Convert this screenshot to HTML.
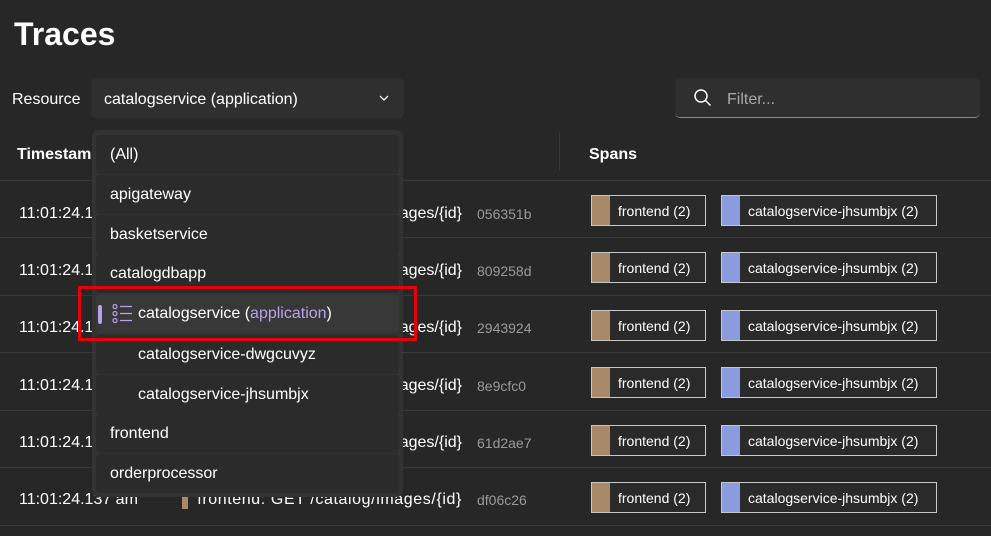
<!DOCTYPE html>
<html><head><style>
body{margin:0;width:991px;height:536px;background:#272727;font-family:"Liberation Sans",sans-serif;color:#fff;position:relative;overflow:hidden}
.a{position:absolute;white-space:nowrap}
h1{position:absolute;left:14px;top:16px;margin:0;font-size:32px;font-weight:bold}
.line{position:absolute;left:0;width:991px;height:1px;background:#3a3a3a}
.ts{font-size:16px;left:19px}
.nm{font-size:16px;right:529px}
.id{font-size:14px;color:#9a9a9a;left:477px}
.b{position:absolute;height:31px;border:1px solid #c8c8c8;background:#2a2a2a;font-size:14px;line-height:30px;box-sizing:border-box}
.b i{position:absolute;left:0;top:0;bottom:0;width:18px}
.b span{position:absolute;left:26px}
.dd{position:absolute;left:92px;top:130px;width:311px;height:367px;background:#333;border-radius:7px}
.it{position:absolute;left:96px;width:303px;height:39px;background:#2b2b2b;border-radius:4px;font-size:16px;line-height:40px}
</style></head><body>
<h1>Traces</h1>
<div class="a" style="left:12px;top:91px;font-size:16px">Resource</div>
<div class="a" style="left:91px;top:78px;width:313px;height:40px;background:#2f2f2f;border-radius:5px"></div>
<div class="a" style="left:104px;top:91px;font-size:16px">catalogservice (application)</div>
<svg class="a" style="left:378px;top:93px" width="12" height="10"><path d="M2 3l4 4 4-4" stroke="#fff" stroke-width="1.3" fill="none"/></svg>
<div class="a" style="left:675px;top:78px;width:305px;height:40px;background:#2f2f2f;border-radius:5px;border-bottom:1px solid #8a8a8a;box-sizing:border-box"></div>
<svg class="a" style="left:693px;top:88px" width="20" height="20"><circle cx="8" cy="8" r="6" stroke="#fff" stroke-width="1.5" fill="none"/><path d="M12.5 12.5l5 5" stroke="#fff" stroke-width="1.5"/></svg>
<div class="a" style="left:727px;top:91px;font-size:16px;color:#a8a8a8">Filter...</div>
<div class="a" style="left:17px;top:146px;font-size:16px;font-weight:bold">Timestamp</div>
<div class="a" style="left:589px;top:146px;font-size:16px;font-weight:bold">Spans</div>
<div class="a" style="left:559px;top:132px;width:1px;height:38px;background:#3a3a3a"></div>
<div class="line" style="top:180px"></div><div class="line" style="top:237px"></div><div class="line" style="top:295px"></div><div class="line" style="top:352px"></div><div class="line" style="top:410px"></div><div class="line" style="top:467px"></div><div class="line" style="top:525px"></div>

<div class="a ts" style="top:205px">11:01:24.1</div><div class="a nm" style="top:205px">ages/{id}</div><div class="a id" style="top:206px">056351b</div>
<div class="a ts" style="top:262px">11:01:24.1</div><div class="a nm" style="top:262px">ages/{id}</div><div class="a id" style="top:263px">809258d</div>
<div class="a ts" style="top:319px">11:01:24.1</div><div class="a nm" style="top:319px">ages/{id}</div><div class="a id" style="top:320px">2943924</div>
<div class="a ts" style="top:377px">11:01:24.1</div><div class="a nm" style="top:377px">ages/{id}</div><div class="a id" style="top:378px">8e9cfc0</div>
<div class="a ts" style="top:434px">11:01:24.1</div><div class="a nm" style="top:434px">ages/{id}</div><div class="a id" style="top:435px">61d2ae7</div>
<div class="a ts" style="top:491px">11:01:24.137 am</div><div class="a" style="left:182px;top:492px;width:6px;height:17px;background:#a88a68"></div><div class="a nm" style="top:491px;letter-spacing:0.6px">frontend: GET /catalog/images/{id}</div><div class="a id" style="top:492px">df06c26</div>

<div class="b" style="left:591px;top:195px;width:115px"><i style="background:#a88a68"></i><span>frontend (2)</span></div><div class="b" style="left:721px;top:195px;width:216px"><i style="background:#8b9be0"></i><span>catalogservice-jhsumbjx (2)</span></div>
<div class="b" style="left:591px;top:252px;width:115px"><i style="background:#a88a68"></i><span>frontend (2)</span></div><div class="b" style="left:721px;top:252px;width:216px"><i style="background:#8b9be0"></i><span>catalogservice-jhsumbjx (2)</span></div>
<div class="b" style="left:591px;top:310px;width:115px"><i style="background:#a88a68"></i><span>frontend (2)</span></div><div class="b" style="left:721px;top:310px;width:216px"><i style="background:#8b9be0"></i><span>catalogservice-jhsumbjx (2)</span></div>
<div class="b" style="left:591px;top:367px;width:115px"><i style="background:#a88a68"></i><span>frontend (2)</span></div><div class="b" style="left:721px;top:367px;width:216px"><i style="background:#8b9be0"></i><span>catalogservice-jhsumbjx (2)</span></div>
<div class="b" style="left:591px;top:425px;width:115px"><i style="background:#a88a68"></i><span>frontend (2)</span></div><div class="b" style="left:721px;top:425px;width:216px"><i style="background:#8b9be0"></i><span>catalogservice-jhsumbjx (2)</span></div>
<div class="b" style="left:591px;top:482px;width:115px"><i style="background:#a88a68"></i><span>frontend (2)</span></div><div class="b" style="left:721px;top:482px;width:216px"><i style="background:#8b9be0"></i><span>catalogservice-jhsumbjx (2)</span></div>

<div class="dd"></div>
<div class="it" style="top:135px;padding-left:14px;box-sizing:border-box">(All)</div>
<div class="it" style="top:175px;padding-left:14px;box-sizing:border-box">apigateway</div>
<div class="it" style="top:215px;padding-left:14px;box-sizing:border-box">basketservice</div>
<div class="it" style="top:254px;padding-left:14px;box-sizing:border-box">catalogdbapp</div>
<div class="it" style="top:294px;background:#383838;padding-left:42px;box-sizing:border-box">catalogservice (<span style="color:#b9a3e6">application</span>)</div>
<div class="a" style="left:98px;top:305px;width:4px;height:19px;background:#b9a3e6;border-radius:2px"></div>
<svg class="a" style="left:111px;top:303px" width="24" height="22"><g stroke="#b9a3e6" stroke-width="1.2" fill="none"><circle cx="4" cy="3.5" r="2"/><circle cx="4" cy="10.5" r="2"/><circle cx="4" cy="17.5" r="2"/><path d="M9 3.5h12M9 10.5h12M9 17.5h12"/></g></svg>
<div class="it" style="top:335px;padding-left:42px;box-sizing:border-box">catalogservice-dwgcuvyz</div>
<div class="it" style="top:375px;padding-left:42px;box-sizing:border-box">catalogservice-jhsumbjx</div>
<div class="it" style="top:414px;padding-left:14px;box-sizing:border-box">frontend</div>
<div class="it" style="top:454px;padding-left:14px;box-sizing:border-box">orderprocessor</div>
<div class="a" style="left:78px;top:286px;width:339px;height:55px;border:3px solid #e8000b;box-sizing:border-box"></div>
</body></html>
